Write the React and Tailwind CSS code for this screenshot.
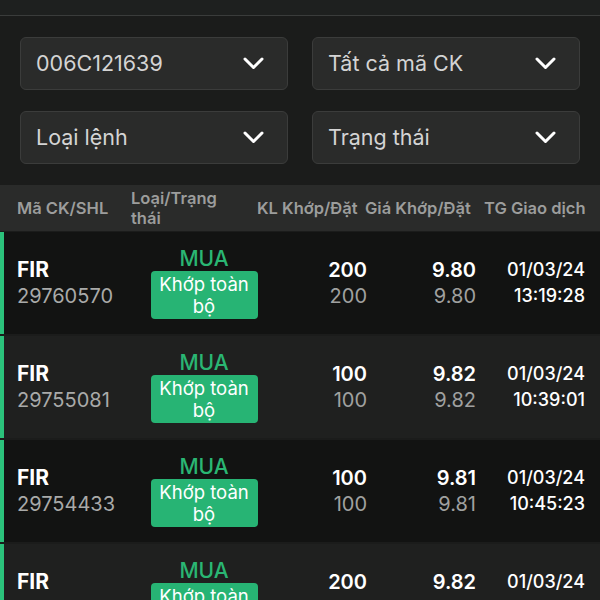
import React from "react";

const orders = [
  { code: "FIR", shl: "29760570", kl: "200", klDat: "200", gia: "9.80", giaDat: "9.80", date: "01/03/24", time: "13:19:28" },
  { code: "FIR", shl: "29755081", kl: "100", klDat: "100", gia: "9.82", giaDat: "9.82", date: "01/03/24", time: "10:39:01" },
  { code: "FIR", shl: "29754433", kl: "100", klDat: "100", gia: "9.81", giaDat: "9.81", date: "01/03/24", time: "10:45:23" },
  { code: "FIR", shl: "29754266", kl: "200", klDat: "200", gia: "9.82", giaDat: "9.82", date: "01/03/24", time: "10:28:48" },
];

const Chevron = () => (
  <svg width="21" height="13" viewBox="0 0 21 13" fill="none">
    <path d="M2 2 L10.5 10.5 L19 2" stroke="#ffffff" strokeWidth="3" strokeLinecap="round" strokeLinejoin="round" />
  </svg>
);

const Select = ({ label }) => (
  <div className="flex h-[53px] items-center justify-between rounded-md border border-[#3b3c3b] bg-[#2a2b2a] pl-[15px] pr-[23px]">
    <span className="text-[21.5px] text-[#d4d4d4]">{label}</span>
    <Chevron />
  </div>
);

export default function App() {
  return (
    <div className="h-screen overflow-hidden bg-[#1b1c1b] font-['Inter',sans-serif]">
      <div className="h-[15px] bg-[#1e201f]" />
      <div className="h-[1px] bg-[#3a3c3b]" />

      <div className="grid grid-cols-2 gap-x-[24px] gap-y-[21px] px-5 py-[21px]">
        <Select label="006C121639" />
        <Select label="Tất cả mã CK" />
        <Select label="Loại lệnh" />
        <Select label="Trạng thái" />
      </div>

      <div className="flex h-[46px] items-center bg-[#2a2b2a] pl-[17px] text-[16.5px] font-semibold leading-[20px] text-[#9c9d9c]">
        <div className="w-[114px] whitespace-nowrap">Mã CK/SHL</div>
        <div className="w-[112px] pr-2">Loại/Trạng thái</div>
        <div className="ml-[14px] w-[108px] whitespace-nowrap">KL Khớp/Đặt</div>
        <div className="w-[119px] whitespace-nowrap">Giá Khớp/Đặt</div>
        <div className="whitespace-nowrap">TG Giao dịch</div>
      </div>

      <div className="flex flex-col gap-[2px] pt-[1px]">
        {orders.map((o, i) => (
          <div
            key={i}
            className={`flex h-[102px] items-center border-l-4 border-[#2bc27b] pl-[13px] pr-[15px] text-[20px] ${
              i % 2 === 0 ? "bg-[#121312]" : "bg-[#1f201f]"
            }`}
          >
            <div className="w-[114px] leading-[26px]">
              <div className="text-[21px] font-bold text-white">{o.code}</div>
              <div className="text-[#a9aaa9]">{o.shl}</div>
            </div>
            <div className="flex w-[146px] flex-col items-center">
              <div className="text-[21px] leading-[24px] font-medium text-[#2ab673]">MUA</div>
              <div className="w-[107px] rounded-[4px] bg-[#27b474] py-[2px] text-center text-[18.5px] leading-[22px] text-white">
                Khớp toàn bộ
              </div>
            </div>
            <div className="w-[90px] text-right leading-[26px]">
              <div className="font-semibold text-white">{o.kl}</div>
              <div className="text-[#a0a1a0]">{o.klDat}</div>
            </div>
            <div className="w-[109px] text-right leading-[26px]">
              <div className="font-semibold text-white">{o.gia}</div>
              <div className="text-[#a0a1a0]">{o.giaDat}</div>
            </div>
            <div className="w-[109px] text-right text-[18px] font-medium leading-[26px] text-white">
              <div>{o.date}</div>
              <div>{o.time}</div>
            </div>
          </div>
        ))}
      </div>
    </div>
  );
}
